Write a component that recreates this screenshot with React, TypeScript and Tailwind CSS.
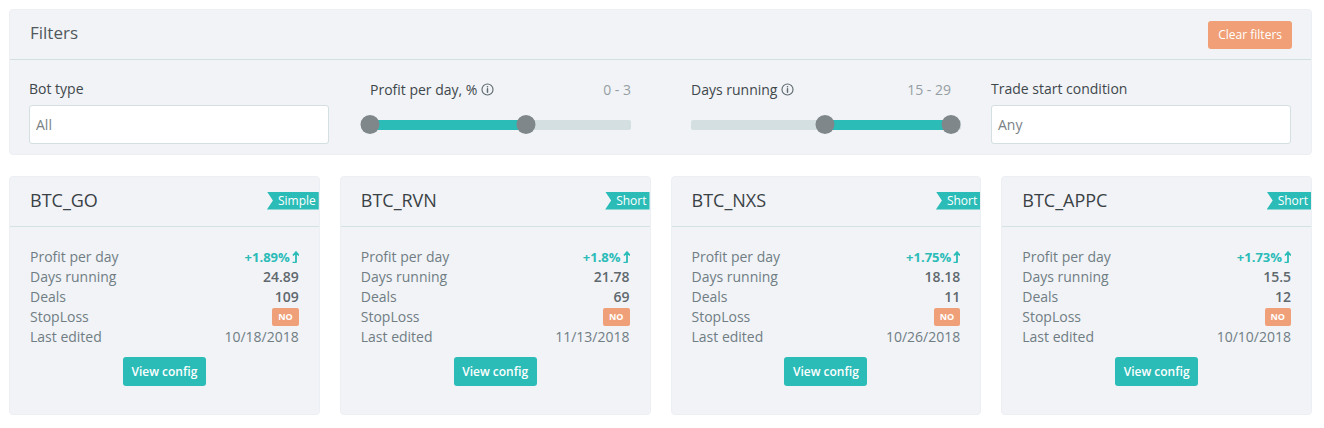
import React from "react";

const bots = [
  { name: "BTC_GO", tag: "Simple", profit: "+1.89%", days: "24.89", deals: "109", edited: "10/18/2018" },
  { name: "BTC_RVN", tag: "Short", profit: "+1.8%", days: "21.78", deals: "69", edited: "11/13/2018" },
  { name: "BTC_NXS", tag: "Short", profit: "+1.75%", days: "18.18", deals: "11", edited: "10/26/2018" },
  { name: "BTC_APPC", tag: "Short", profit: "+1.73%", days: "15.5", deals: "12", edited: "10/10/2018" },
];

function InfoIcon() {
  return (
    <svg className="w-[13px] h-[13px] text-[#5f6b70] ml-1" viewBox="0 0 16 16" fill="none" stroke="currentColor">
      <circle cx="8" cy="8" r="6.8" strokeWidth="1.4" />
      <path d="M8 7v4.5" strokeWidth="1.8" strokeLinecap="round" />
      <circle cx="8" cy="4.6" r="1" fill="currentColor" stroke="none" />
    </svg>
  );
}

function UpArrow() {
  return (
    <svg className="w-[8px] h-[12px] ml-[1px]" viewBox="0 0 8 12" fill="none" stroke="currentColor">
      <path d="M5 11.5V1.5M2 4.5L5 1.2L8 4.5" strokeWidth="1.8" />
      <path d="M5 10.5Q5 11.5 3.5 11.5H1.5" strokeWidth="1.6" />
    </svg>
  );
}

function Slider({ from, to }: { from: number; to: number }) {
  return (
    <div className="relative h-[20px] mt-[16px]">
      <div className="absolute left-0 right-0 top-[5px] h-[10px] bg-[#d3dfe0] rounded-[2px]" />
      <div
        className="absolute top-[5px] h-[10px] bg-[#2bbcb7]"
        style={{ left: `${from}px`, width: `${to - from}px` }}
      />
      <div className="absolute top-0 w-[19px] h-[19px] rounded-full bg-[#7f878b] -translate-x-1/2" style={{ left: `${from}px` }} />
      <div className="absolute top-0 w-[19px] h-[19px] rounded-full bg-[#7f878b] -translate-x-1/2" style={{ left: `${to}px` }} />
    </div>
  );
}

function BotCard({ bot }: { bot: (typeof bots)[number] }) {
  return (
    <div className="flex-1 min-w-0 h-[239px] bg-[#f1f3f7] rounded-[4px] border border-[#eceff3] flex flex-col">
      <div className="h-[50px] flex items-center justify-between border-b border-[#d3e2e3] pl-[20px]">
        <span className="text-[18px] text-[#3a4145] mt-[-2px]">{bot.name}</span>
        <span
          className="bg-[#2bbcb7] text-white text-[12px] leading-[18px] h-[18px] pl-[11px] pr-[3px] mb-[2px]"
          style={{ clipPath: "polygon(0 0, 100% 0, 100% 100%, 0 100%, 6px 50%)" }}
        >
          {bot.tag}
        </span>
      </div>
      <div className="px-[20px] pt-[20px] text-[14px] leading-[20px] text-[#707d83]">
        <div className="flex justify-between">
          <span>Profit per day</span>
          <span className="flex items-center font-bold text-[13px] text-[#2bbcb7]">
            {bot.profit}
            <UpArrow />
          </span>
        </div>
        <div className="flex justify-between">
          <span>Days running</span>
          <span className="font-semibold text-[14px] text-[#5f686d]">{bot.days}</span>
        </div>
        <div className="flex justify-between">
          <span>Deals</span>
          <span className="font-semibold text-[14px] text-[#5f686d]">{bot.deals}</span>
        </div>
        <div className="flex justify-between items-center">
          <span>StopLoss</span>
          <span className="bg-[#f0a078] text-white font-bold text-[9px] leading-[18px] h-[18px] px-[6px] rounded-[2px]">NO</span>
        </div>
        <div className="flex justify-between">
          <span>Last edited</span>
          <span className="text-[#707d83]">{bot.edited}</span>
        </div>
        <div className="flex justify-center mt-[10px]">
          <button className="bg-[#2bbcb7] text-white text-[12px] font-semibold h-[29px] w-[83px] rounded-[3px]">View config</button>
        </div>
      </div>
    </div>
  );
}

export default function App() {
  return (
    <div className="w-[1324px] h-[428px] bg-white p-[9px] font-['Open_Sans',sans-serif]">
      {/* Filters panel */}
      <div className="w-[1303px] h-[146px] bg-[#f1f3f7] rounded-[4px] border border-[#eceff3]">
        <div className="h-[50px] border-b border-[#d3e0e1] flex items-center justify-between pl-[20px] pr-[19px]">
          <span className="text-[17px] text-[#50585c] mt-[-3px]">Filters</span>
          <button className="bg-[#f09f76] text-white text-[12px] h-[28px] px-[10px] rounded-[3px]">Clear filters</button>
        </div>
        <div className="flex pl-[19px] pt-[19px] text-[14px] text-[#3f474b]">
          <div className="w-[300px]">
            <div className="h-[20px] leading-[20px]">Bot type</div>
            <div className="mt-[6px] h-[39px] bg-white border border-[#d3dfe0] rounded-[3px] flex items-center px-[6px] text-[#7a8185]">All</div>
          </div>
          <div className="w-[270px] ml-[32px]">
            <div className="h-[20px] flex items-center justify-between pl-[9px]">
              <span className="flex items-center">Profit per day, %<InfoIcon /></span>
              <span className="text-[#959ea2]">0 - 3</span>
            </div>
            <Slider from={9} to={165} />
          </div>
          <div className="w-[270px] ml-[60px]">
            <div className="h-[20px] flex items-center justify-between pr-[10px]">
              <span className="flex items-center">Days running<InfoIcon /></span>
              <span className="text-[#959ea2]">15 - 29</span>
            </div>
            <Slider from={134} to={260} />
          </div>
          <div className="w-[300px] ml-[30px]">
            <div className="h-[20px] leading-[20px]">Trade start condition</div>
            <div className="mt-[6px] h-[39px] bg-white border border-[#d3dfe0] rounded-[3px] flex items-center px-[6px] text-[#7a8185]">Any</div>
          </div>
        </div>
      </div>
      {/* Bot cards */}
      <div className="w-[1303px] flex gap-[20px] mt-[21px]">
        {bots.map((b) => (
          <BotCard key={b.name} bot={b} />
        ))}
      </div>
    </div>
  );
}
